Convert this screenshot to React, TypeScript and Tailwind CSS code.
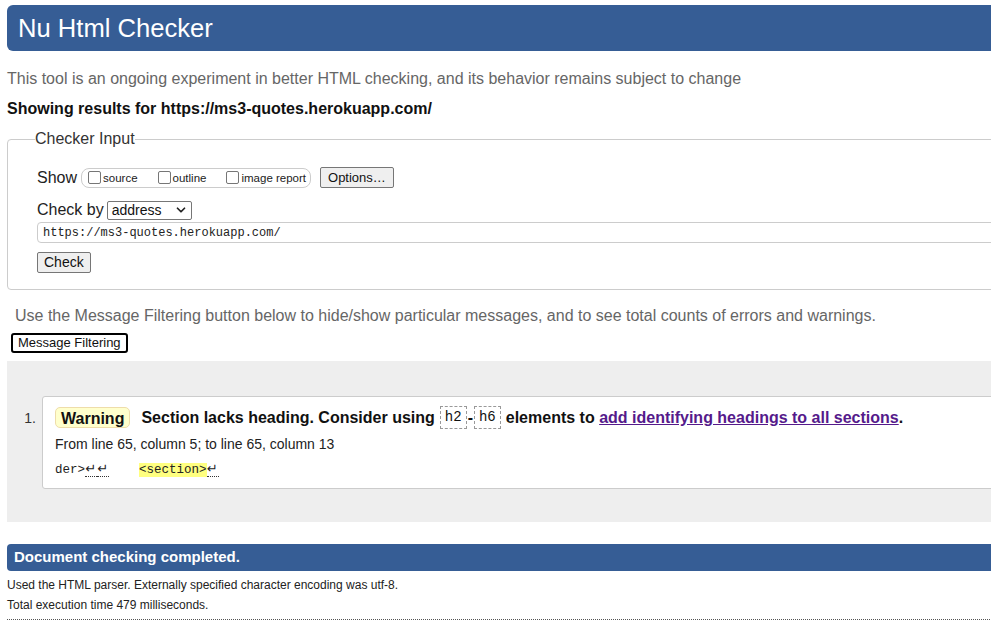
import { ChevronDown } from "lucide-react";

const sans = "font-['Liberation_Sans',Arial,sans-serif]";
const mono = "font-['Liberation_Mono','DejaVu_Sans_Mono',monospace]";

function Check({ label }: { label: string }) {
  return (
    <label className="flex items-center mr-[14px] last:mr-[4px]">
      <span className="ml-[6px] mr-[2px] h-[13px] w-[13px] rounded-[2px] border border-[#767676] bg-white" />
      <span className="text-[11.5px] text-[#222] mt-[2px]">{label}</span>
    </label>
  );
}

function Code({ children }: { children: string }) {
  return (
    <code
      className={`${mono} inline-block border border-dashed border-[#999] px-[4px] text-[14px] font-normal leading-[21px] align-middle`}
    >
      {children}
    </code>
  );
}

function Ret() {
  return (
    <span className="inline-block w-[12px] border-b border-dotted border-[#333] text-center font-['DejaVu_Sans',sans-serif] text-[13px] leading-[15px]">
      ↵
    </span>
  );
}

export default function App() {
  return (
    <div className={`${sans} h-[635px] w-[991px] overflow-hidden bg-white`}>
      <div className="w-[1120px] pl-[7px] pt-[5px]">
        <h1 className="flex h-[46px] items-center rounded-l-[6px] bg-[#365d95] pl-[11px] text-[25.6px] font-normal text-white">
          Nu Html Checker
        </h1>

        <p className="mt-[19px] text-[16px] leading-[18px] text-[#666]">
          This tool is an ongoing experiment in better HTML checking, and its behavior remains subject to change
        </p>
        <p className="mt-[12px] text-[16px] font-bold leading-[18px] text-[#111]">
          Showing results for https://ms3-quotes.herokuapp.com/
        </p>

        <fieldset className="mt-[12px] rounded-[4px] border border-[#ccc] px-[29px] pb-[15px]">
          <legend className="-ml-[2px] px-0 text-[16px] leading-[18px] text-[#333]">Checker Input</legend>

          <div className="mt-[19px] flex h-[21px] items-center">
            <span className="text-[16px] text-[#222]">Show</span>
            <div className="ml-[4px] flex h-[20px] items-center rounded-[8px] border border-[#ccc]">
              <Check label="source" />
              <Check label="outline" />
              <Check label="image report" />
            </div>
            <button className="ml-[9px] h-[21px] rounded-[2px] border border-[#767676] bg-[#efefef] px-[7px] text-[13px] leading-[19px] text-[#111]">
              Options…
            </button>
          </div>

          <div className="mt-[12px] flex h-[20px] items-center">
            <span className="text-[16px] text-[#222]">Check by</span>
            <div className="ml-[3px] flex h-[19px] w-[85px] items-center justify-between rounded-[2px] border border-[#767676] bg-white pl-[4px] pr-[3px] text-[14px] text-[#111]">
              <span>address</span>
              <ChevronDown size={14} strokeWidth={3} className="text-[#222]" />
            </div>
          </div>

          <div
            className={`${mono} mt-[2px] flex h-[21px] items-center rounded-[4px] border border-[#ccc] pl-[5px] text-[12px] text-[#222]`}
          >
            https://ms3-quotes.herokuapp.com/
          </div>

          <button className="mt-[9px] h-[21px] rounded-[2px] border border-[#767676] bg-[#efefef] px-[6px] text-[14px] leading-[19px] text-[#111]">
            Check
          </button>
        </fieldset>

        <p className="mt-[17px] pl-[8px] text-[16px] leading-[18px] text-[#666]">
          Use the Message Filtering button below to hide/show particular messages, and to see total counts of errors and warnings.
        </p>
        <button className="ml-[4px] mt-[8px] h-[20px] rounded-[3px] border-2 border-black bg-white px-[5px] text-[13px] leading-[16px] text-[#111]">
          Message Filtering
        </button>

        <div className="mt-[7px] flex h-[161px] bg-[#eee] pt-[35px]">
          <span className="w-[35px] pt-[13px] pr-[6px] text-right text-[14px] leading-[18px] text-[#333]">1.</span>
          <div className="h-[93px] flex-1 rounded-l-[3px] border border-[#ccc] bg-white pl-[12px] pt-[9px]">
            <div className="flex items-center text-[16px] font-bold leading-[21px] text-[#111]">
              <span className="h-[21px] rounded-[5px] border border-[#eeddaa] bg-[#ffffcc] px-[5px]">Warning</span>
              <span className="ml-[11px]">Section lacks heading. Consider using</span>
              <span className="ml-[5px]">
                <Code>h2</Code>
              </span>
              <span className="mx-[1px]">-</span>
              <Code>h6</Code>
              <span className="ml-[5px]">elements to&nbsp;</span>
              <a className="text-[#551a8b] underline">add identifying headings to all sections</a>
              <span>.</span>
            </div>
            <p className="mt-[7px] text-[14px] leading-[16px] text-[#222]">
              From line 65, column 5; to line 65, column 13
            </p>
            <p className={`${mono} mt-[9px] whitespace-pre text-[12.5px] leading-[16px] text-[#222]`}>
              der&gt;
              <Ret />
              <Ret />
              {"    "}
              <span className="bg-[#ffff80]">&lt;section&gt;</span>
              <Ret />
            </p>
          </div>
        </div>

        <div className="mt-[22px] flex h-[27px] items-center rounded-l-[4px] bg-[#365d95] pl-[7px] text-[15px] font-bold text-white">
          Document checking completed.
        </div>
        <p className="mt-[4px] text-[12px] leading-[20px] text-[#222]">
          Used the HTML parser. Externally specified character encoding was utf-8.
        </p>
        <p className="text-[12px] leading-[20px] text-[#222]">Total execution time 479 milliseconds.</p>
        <div className="mt-[4px] border-b border-dotted border-[#555]" />
      </div>
    </div>
  );
}
